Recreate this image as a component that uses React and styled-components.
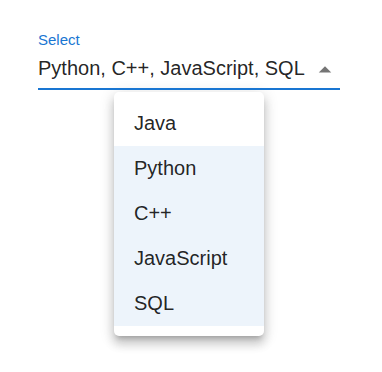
import React from "react";
import styled, { createGlobalStyle } from "styled-components";

const GlobalStyle = createGlobalStyle`
  body {
    margin: 0;
    background: #fff;
    font-family: "Liberation Sans", Arial, sans-serif;
  }
`;

const options = ["Java", "Python", "C++", "JavaScript", "SQL"];
const selected = ["Python", "C++", "JavaScript", "SQL"];

const Page = styled.div`
  width: 382px;
  height: 372px;
  padding: 31px 0 0 38px;
  box-sizing: border-box;
`;

const Field = styled.div`
  width: 302px;
  display: flex;
  flex-direction: column;
`;

const Label = styled.label`
  font-size: 15px;
  line-height: 18px;
  color: #1976d2;
`;

const Input = styled.div`
  display: flex;
  align-items: flex-start;
  justify-content: space-between;
  padding: 4px 0 5px;
  border-bottom: 2px solid #1976d2;
`;

const Value = styled.span`
  font-size: 20px;
  line-height: 30px;
  color: rgba(0, 0, 0, 0.87);
  white-space: nowrap;
`;

const Arrow = styled.svg`
  width: 30px;
  height: 30px;
  margin: 2px 0 -2px;
  fill: rgba(0, 0, 0, 0.54);
`;

const Menu = styled.ul`
  list-style: none;
  margin: 2px 0 0 76px;
  padding: 9px 0 10px;
  width: 150px;
  background: #fff;
  border-radius: 5px;
  box-shadow: 0px 5px 5px -3px rgba(0, 0, 0, 0.2),
    0px 8px 10px 1px rgba(0, 0, 0, 0.14), 0px 3px 14px 2px rgba(0, 0, 0, 0.12);
`;

const Item = styled.li`
  height: 45px;
  display: flex;
  align-items: center;
  padding: 0 20px;
  font-size: 20px;
  color: rgba(0, 0, 0, 0.87);
  background: ${(p) => (p.$selected ? "rgba(25, 118, 210, 0.08)" : "transparent")};
`;

export default function App() {
  return (
    <Page>
      <GlobalStyle />
      <Field>
        <Label>Select</Label>
        <Input>
          <Value>{selected.join(", ")}</Value>
          <Arrow viewBox="0 0 24 24">
            <path d="M7 14l5-5 5 5z" />
          </Arrow>
        </Input>
      </Field>
      <Menu>
        {options.map((o) => (
          <Item key={o} $selected={selected.includes(o)}>
            {o}
          </Item>
        ))}
      </Menu>
    </Page>
  );
}
